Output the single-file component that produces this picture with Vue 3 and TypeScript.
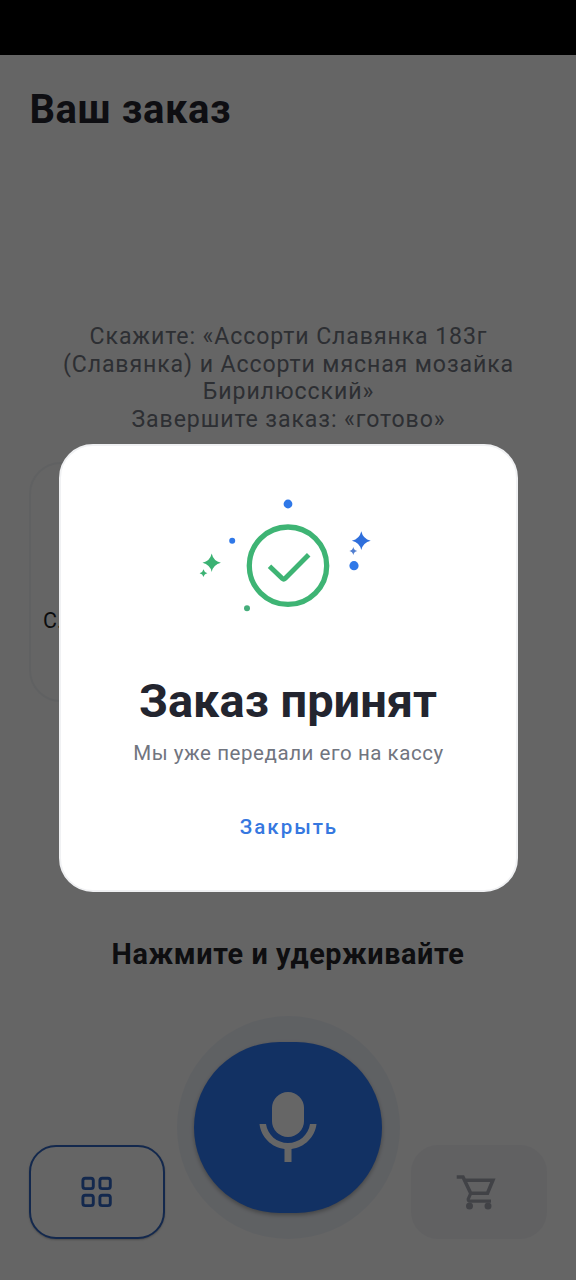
<script setup lang="ts">
interface Dot { x: number; y: number; r: number; color: string }
interface Star { x: number; y: number; s: number; color: string }

const hint: string[] = [
  'Скажите: «Ассорти Славянка 183г',
  '(Славянка) и Ассорти мясная мозайка',
  'Бирилюсский»',
  'Завершите заказ: «готово»',
]
const dots: Dot[] = [
  { x: 98, y: 19, r: 4.4, color: '#2f78e8' },
  { x: 42.2, y: 55.7, r: 3, color: '#2f78e8' },
  { x: 164, y: 80.7, r: 4.6, color: '#2f78e8' },
  { x: 57, y: 123.2, r: 3, color: '#45ad7b' },
]
const stars: Star[] = [
  { x: 171.3, y: 55.7, s: 9.4, color: '#2f6fdc' },
  { x: 163.3, y: 66, s: 4, color: '#527fd0' },
  { x: 21.7, y: 77.8, s: 9.2, color: '#3bb273' },
  { x: 13.5, y: 88.2, s: 3.9, color: '#3bb273' },
]
const starPath = 'M0-1Q.18-.18 1 0Q.18.18 0 1Q-.18.18-1 0Q-.18-.18 0-1Z'
</script>

<template>
  <div class="screen">
    <div class="status"></div>
    <main class="page">
      <h1 class="title">Ваш заказ</h1>
      <p class="hint">
        <span v-for="line in hint" :key="line">{{ line }}</span>
      </p>
      <section class="product"><span>С...</span></section>
      <h2 class="hold">Нажмите и удерживайте</h2>
      <footer class="controls">
        <button class="side catalog" aria-label="Каталог">
          <svg width="32" height="32" viewBox="0 0 32 32" fill="none" stroke="#3065c0" stroke-width="2.9">
            <rect x="1.9" y="2.2" width="10.4" height="10.4" rx="2.4" />
            <rect x="18.9" y="2.2" width="10.4" height="10.4" rx="2.4" />
            <rect x="1.9" y="19.2" width="10.4" height="10.4" rx="2.4" />
            <rect x="18.9" y="19.2" width="10.4" height="10.4" rx="2.4" />
          </svg>
        </button>
        <div class="halo">
          <button class="mic" aria-label="Говорить">
            <svg width="58" height="72" viewBox="0 0 58 72">
              <rect x="13" y="1" width="32" height="45" rx="16" fill="#fff" />
              <path d="M0.5 33H7C8.500 44 18 52 29 52S49.500 44 51 33H57.500C56 46 45.500 56.500 32.500 58V71H25.500V58C12.500 56.500 2 46 .5 33Z" fill="#fff" />
            </svg>
          </button>
        </div>
        <button class="side cart" aria-label="Корзина">
          <svg width="42" height="38" viewBox="0 0 42 38" fill="none" stroke="#a3a6b0" stroke-width="3.6">
            <path d="M1.700 4H8L15.700 20.300H32.500L37.900 7.200H9.500" />
            <path d="M15.700 20.300L13.200 26.200Q13 28.200 15 28.200H36" stroke-width="3.200" />
            <circle cx="14.500" cy="33" r="3.500" fill="#a3a6b0" stroke="none" />
            <circle cx="33" cy="33" r="3.500" fill="#a3a6b0" stroke="none" />
          </svg>
        </button>
      </footer>
    </main>
    <div class="scrim">
      <section class="dialog" role="dialog">
        <svg class="success" width="196" height="140" viewBox="0 0 196 140">
          <circle cx="98" cy="80.700" r="38.700" fill="none" stroke="#3eb474" stroke-width="5.300" />
          <path d="M79.500 81.200L92.300 93.500Q93.700 94.800 95.100 93.500L118.700 69.700" fill="none" stroke="#3eb474" stroke-width="4.900" />
          <circle v-for="(d, i) in dots" :key="i" :cx="d.x" :cy="d.y" :r="d.r" :fill="d.color" />
          <path v-for="(s, i) in stars" :key="'s' + i" :d="starPath" :fill="s.color" :transform="`translate(${s.x} ${s.y}) scale(${s.s})`" />
        </svg>
        <h2 class="accepted">Заказ принят</h2>
        <p class="passed">Мы уже передали его на кассу</p>
        <button class="close">Закрыть</button>
      </section>
    </div>
  </div>
</template>

<style>
body { background: #666; }
</style>

<style scoped>
* { box-sizing: border-box; margin: 0; padding: 0; }
button { border: 0; background: none; font: inherit; }
svg { display: block; }
.screen {
  position: relative;
  display: flex;
  flex-direction: column;
  width: 576px;
  height: 1280px;
  overflow: hidden;
  background: #fcfcfc;
  font-family: Roboto, "Noto Sans", sans-serif;
}
.status { height: 55px; background: #000; flex: none; }
.page { display: flex; flex-direction: column; flex: 1; }
.title {
  margin: 31px 0 0 29.500px;
  font-size: 40px;
  line-height: 48px;
  font-weight: 700;
  letter-spacing: 0.580px;
  color: #23252f;
}
.hint {
  display: flex;
  flex-direction: column;
  align-items: center;
  margin-top: 189px;
  padding-left: 1px;
  font-size: 23.1px;
  line-height: 27.7px;
  letter-spacing: 0.9px;
  color: #71757f;
  white-space: nowrap;
}
.product {
  width: 200px;
  height: 240px;
  margin: 28.200px 0 0 29px;
  padding: 144px 0 0 12px;
  border: 2px solid #f0f2f5;
  border-radius: 32px;
  font-size: 21.500px;
  line-height: 26px;
  color: #1d1e24;
}
.hold {
  margin-top: 234px;
  text-align: center;
  font-size: 28.800px;
  line-height: 36px;
  font-weight: 700;
  letter-spacing: 0.6px;
  color: #23242a;
}
.controls {
  display: flex;
  align-items: flex-end;
  justify-content: space-between;
  height: 223px;
  margin: 44px 29px 0;
}
.side {
  display: flex;
  align-items: center;
  justify-content: center;
  width: 136px;
  height: 94px;
  border-radius: 27px;
}
.catalog { border: 2px solid #3065c0; background: #fcfcfc; box-shadow: 0 1px 2px rgba(0, 0, 0, 0.25); }
.cart { background: #f2f2f6; padding-right: 6px; }
.halo {
  display: flex;
  align-items: center;
  justify-content: center;
  width: 223px;
  height: 223px;
  border-radius: 50%;
  background: #eef2f8;
}
.mic {
  display: flex;
  align-items: center;
  justify-content: center;
  width: 188px;
  height: 171px;
  padding-bottom: 1px;
  border-radius: 86px;
  background: #2f7af8;
  box-shadow: 0 2px 4px rgba(0, 0, 0, 0.3);
}
.scrim {
  position: absolute;
  inset: 0;
  display: flex;
  align-items: flex-start;
  justify-content: center;
  padding-top: 444px;
  background: rgba(0, 0, 0, 0.6);
}
.dialog {
  display: flex;
  flex-direction: column;
  align-items: center;
  width: 459px;
  height: 448px;
  padding-top: 39px;
  border: 2px solid #f0f1f3;
  border-radius: 34px;
  background: #fff;
}
.accepted {
  margin-top: 48px;
  font-size: 47px;
  line-height: 56px;
  font-weight: 700;
  color: #23252f;
}
.passed {
  margin-top: 10px;
  padding-left: 1px;
  font-size: 20.500px;
  line-height: 28px;
  letter-spacing: 0.56px;
  color: #71757f;
}
.close {
  margin-top: 46px;
  padding-left: 2px;
  font-size: 20.500px;
  line-height: 28px;
  font-weight: 500;
  letter-spacing: 2px;
  color: #3678e0;
}
</style>
